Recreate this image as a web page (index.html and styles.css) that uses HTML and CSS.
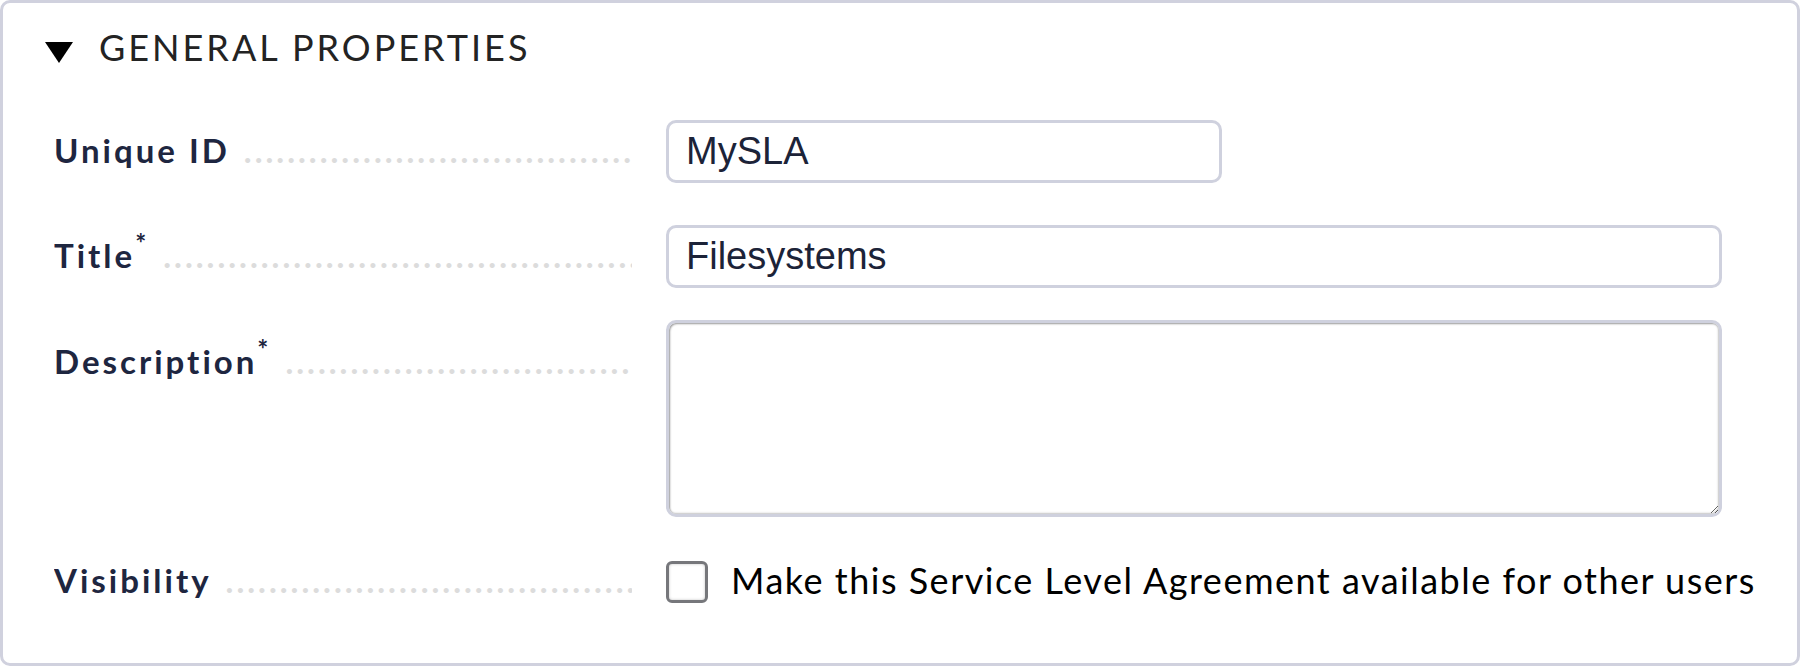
FILE: index.html
```html
<!DOCTYPE html>
<html>
<head>
<meta charset="utf-8">
<link rel="stylesheet" href="styles.css">
</head>
<body>
<div class="box">
  <div class="header">
    <svg class="toggle" width="28" height="21" viewBox="0 0 28 21"><polygon points="0,0 28,0 14,21" fill="#000"/></svg>
    <h2 class="heading">GENERAL PROPERTIES</h2>
  </div>
  <div class="form">
    <div class="row row-id">
      <div class="legend pad-s"><span class="ltext">Unique ID</span><span class="dots">..............................................................</span></div>
      <div class="field"><input class="text short" type="text" value="MySLA"></div>
    </div>
    <div class="row row-title">
      <div class="legend pad-s"><span class="ltext">Title</span><sup class="req">*</sup><span class="dots">..............................................................</span></div>
      <div class="field"><input class="text" type="text" value="Filesystems"></div>
    </div>
    <div class="row row-desc">
      <div class="legend pad-l"><span class="ltext">Description</span><sup class="req">*</sup><span class="dots">..............................................................</span></div>
      <div class="field"><textarea class="area"></textarea></div>
    </div>
    <div class="row row-vis">
      <div class="legend"><span class="ltext">Visibility</span><span class="dots">..............................................................</span></div>
      <div class="field check"><input class="cb" type="checkbox" id="vis"><label class="cblabel" for="vis">Make this Service Level Agreement available for other users</label></div>
    </div>
  </div>
</div>
</body>
</html>
```
FILE: styles.css
```css
html, body {
  margin: 0;
  padding: 0;
  background: #fff;
}
body {
  font-family: Lato, "Open Sans", sans-serif;
}
.box {
  box-sizing: border-box;
  width: 1800px;
  height: 666px;
  border: 3px solid #d0d1de;
  border-radius: 10px;
  background: #fff;
}
.header {
  display: flex;
  align-items: flex-start;
  padding: 20px 0 0 42px;
}
.toggle {
  display: block;
  margin-top: 19px;
  flex: none;
}
.heading {
  margin: 0 0 0 26px;
  font-size: 36px;
  line-height: 48px;
  font-weight: 400;
  letter-spacing: 3px;
  color: #232323;
}
.form {
  display: flex;
  flex-direction: column;
  padding: 0 75px 0 51px;
}
.row {
  display: grid;
  grid-template-columns: 578px 1fr;
  column-gap: 34px;
  align-items: start;
}
.row-id { margin-top: 49px; }
.row-title { margin-top: 42px; }
.row-desc { margin-top: 32px; }
.row-vis { margin-top: 43px; }
.legend {
  display: flex;
  align-items: flex-start;
  overflow: hidden;
  white-space: nowrap;
  font-size: 33px;
  line-height: 40px;
  font-weight: 700;
  letter-spacing: 3px;
  color: #1e2640;
}
.pad-s { padding-top: 10px; }
.pad-l { padding-top: 21px; }
.ltext { flex: none; }
.req {
  flex: none;
  font-size: 26px;
  line-height: 24px;
  vertical-align: top;
  margin-top: -4px;
  letter-spacing: 3px;
  font-weight: 700;
  color: #1e2640;
}
.dots {
  flex: 1;
  min-width: 0;
  overflow: hidden;
  margin-left: 14px;
  color: #dcdcdc;
}
.field {
  min-width: 0;
}
.text {
  display: block;
  box-sizing: border-box;
  width: 100%;
  height: 63px;
  margin: 0;
  padding: 0 17px;
  border: 3px solid #cfd1de;
  border-radius: 10px;
  background: #fff;
  font-family: "Liberation Sans", Arial, sans-serif;
  font-size: 38px;
  color: #1c2338;
  outline: none;
}
.text.short {
  width: 556px;
}
.area {
  display: block;
  box-sizing: border-box;
  width: 100%;
  height: 197px;
  margin: 0;
  padding: 8px 12px;
  border: 3px solid #cfd1de;
  border-radius: 10px;
  box-shadow: inset 1px 1px 2px #9a9a9a, inset -1px -1px 2px #c8c8c8;
  background: #fff;
  font-family: "Liberation Sans", Arial, sans-serif;
  font-size: 33px;
  outline: none;
}
.check {
  display: flex;
  align-items: flex-start;
}
.cb {
  appearance: none;
  -webkit-appearance: none;
  flex: none;
  box-sizing: border-box;
  width: 42px;
  height: 42px;
  margin: 1px 0 0 0;
  border: 3px solid #76777b;
  border-radius: 6px;
  background: #fff;
  box-shadow: inset 0 0 3px #c4c4c4;
}
.cblabel {
  margin-left: 23px;
  font-size: 36px;
  line-height: 40px;
  font-weight: 400;
  letter-spacing: 1.5px;
  color: #000;
  white-space: nowrap;
}
```
